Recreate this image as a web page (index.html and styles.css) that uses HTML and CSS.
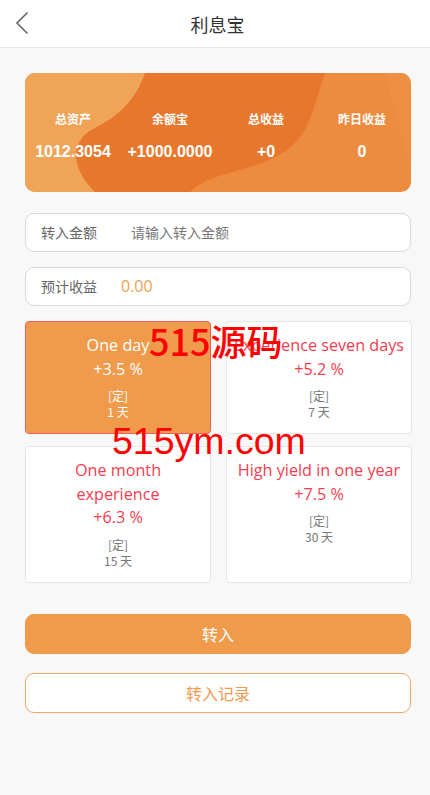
FILE: index.html
```html
<!DOCTYPE html>
<html lang="zh-CN">
<head>
<meta charset="utf-8">
<title>利息宝</title>
<link rel="stylesheet" href="styles.css">
</head>
<body>
<div class="page">
  <header class="topbar">
    <a class="back" href="#" aria-label="返回">
      <svg width="14" height="24" viewBox="0 0 14 24"><path d="M12.5 1.5 L2 12 L12.5 22.5" fill="none" stroke="#666" stroke-width="1.6"/></svg>
    </a>
    <h1 class="title">利息宝</h1>
  </header>

  <main class="content">
    <section class="banner">
      <svg class="banner-bg" viewBox="0 0 386 119" preserveAspectRatio="none">
        <rect width="386" height="119" fill="#ed8b3e"/>
        <path d="M0 0 H120 C110 30 90 45 70 55 C40 70 50 100 70 119 H0 Z" fill="#f0a458"/>
        <path d="M120 0 H300 C290 30 285 55 270 70 C240 100 190 95 165 119 H70 C50 100 40 70 70 55 C90 45 110 30 120 0 Z" fill="#e8772e"/>
        <path d="M360 0 C370 40 380 70 386 100 V0 Z" fill="#ee934a" opacity="0.6"/>
      </svg>
      <div class="stats">
        <div class="stat"><span class="stat-label">总资产</span><span class="stat-value">1012.3054</span></div>
        <div class="stat"><span class="stat-label">余额宝</span><span class="stat-value">+1000.0000</span></div>
        <div class="stat"><span class="stat-label">总收益</span><span class="stat-value">+0</span></div>
        <div class="stat"><span class="stat-label">昨日收益</span><span class="stat-value">0</span></div>
      </div>
    </section>

    <div class="field">
      <span class="field-label">转入金额</span>
      <input class="field-input" type="text" placeholder="请输入转入金额">
    </div>
    <div class="field">
      <span class="field-label">预计收益</span>
      <span class="field-value">0.00</span>
    </div>

    <div class="plans">
      <div class="plan active">
        <div class="plan-name">One day</div>
        <div class="plan-rate">+3.5 %</div>
        <div class="plan-type">[定]</div>
        <div class="plan-days">1 天</div>
      </div>
      <div class="plan">
        <div class="plan-name">Experience seven days</div>
        <div class="plan-rate">+5.2 %</div>
        <div class="plan-type">[定]</div>
        <div class="plan-days">7 天</div>
      </div>
      <div class="plan">
        <div class="plan-name">One month<br>experience</div>
        <div class="plan-rate">+6.3 %</div>
        <div class="plan-type">[定]</div>
        <div class="plan-days">15 天</div>
      </div>
      <div class="plan">
        <div class="plan-name">High yield in one year</div>
        <div class="plan-rate">+7.5 %</div>
        <div class="plan-type">[定]</div>
        <div class="plan-days">30 天</div>
      </div>
    </div>

    <button class="btn btn-primary" type="button">转入</button>
    <button class="btn btn-outline" type="button">转入记录</button>
  </main>

  <div class="wm wm1">515源码</div>
  <div class="wm wm2">515ym.com</div>
</div>
</body>
</html>
```

FILE: styles.css
```css
* { box-sizing: border-box; }
html, body { margin: 0; padding: 0; }
body {
  background: #f8f8f8;
  font-family: "Open Sans", "Noto Sans CJK SC", sans-serif;
  color: #333;
  width: 430px;
  min-height: 795px;
}
.page { position: relative; min-height: 795px; }

.topbar {
  height: 48px;
  background: #fff;
  border-bottom: 1px solid #e6e6e6;
  display: flex;
  align-items: center;
  justify-content: center;
  position: relative;
}
.back {
  position: absolute;
  left: 15px;
  top: 11px;
  display: block;
  line-height: 0;
}
.title {
  margin: 0 0 0 5px;
  font-size: 18px;
  font-weight: 400;
  color: #333;
  font-family: "Noto Sans CJK SC", sans-serif;
}

.content {
  padding: 25px 19px 0 25px;
  display: flex;
  flex-direction: column;
}

.banner {
  position: relative;
  height: 119px;
  border-radius: 10px;
  overflow: hidden;
}
.banner-bg {
  position: absolute;
  inset: 0;
  width: 100%;
  height: 100%;
}
.stats {
  position: relative;
  display: grid;
  grid-template-columns: 96px 98px 94px 98px;
  padding-top: 37px;
  color: #fff;
  text-align: center;
}
.stat { display: flex; flex-direction: column; align-items: center; }
.stat-label {
  font-family: "Noto Sans CJK SC", sans-serif;
  font-size: 12px;
  font-weight: 700;
  line-height: 18px;
}
.stat-value {
  margin-top: 14px;
  font-family: "Liberation Sans", "Noto Sans CJK SC", sans-serif;
  font-size: 16px;
  font-weight: 700;
  line-height: 20px;
}

.field {
  margin-top: 21px;
  height: 39px;
  background: #fff;
  border: 1px solid #d9d9d9;
  border-radius: 9px;
  display: flex;
  align-items: center;
  padding-left: 15px;
  padding-bottom: 1px;
}
.field + .field { margin-top: 15px; }
.field-label {
  font-family: "Noto Sans CJK SC", sans-serif;
  font-size: 14px;
  color: #666;
  width: 80px;
  flex: none;
}
.field-input {
  border: 0;
  outline: 0;
  background: transparent;
  font-family: "Noto Sans CJK SC", sans-serif;
  font-size: 14px;
  padding: 0 0 0 10px;
  color: #333;
  flex: 1;
}
.field-input::placeholder { color: #777; }
.field-value {
  font-family: "Open Sans", sans-serif;
  font-size: 16px;
  color: #f0a04f;
}

.plans {
  margin-top: 15px;
  display: grid;
  grid-template-columns: 186px 186px;
  column-gap: 15px;
  row-gap: 12px;
}
.plan {
  background: #fff;
  border: 1px solid #e6e6e6;
  border-radius: 4px;
  text-align: center;
  padding: 12px 2px 12px;
  min-height: 113px;
}
.plan:nth-child(n+3) { min-height: 137px; }
.plan.active {
  background: #f09a4b;
  border-color: #f2605a;
}
.plan-name, .plan-rate {
  font-size: 16.2px;
  line-height: 23.5px;
  color: #f43d50;
}
.plan-type, .plan-days {
  font-family: "Noto Sans CJK SC", sans-serif;
  font-size: 12px;
  line-height: 16px;
  color: #777;
}
.plan-type { margin-top: 7px; }
.plan.active .plan-name,
.plan.active .plan-rate,
.plan.active .plan-type,
.plan.active .plan-days { color: #fff; }

.btn {
  display: block;
  width: 100%;
  height: 40px;
  border-radius: 9px;
  font-family: "Noto Sans CJK SC", sans-serif;
  font-size: 16px;
  cursor: pointer;
}
.btn-primary {
  margin-top: 31px;
  background: #f09b4b;
  border: 1px solid #f09b4b;
  color: #fff;
}
.btn-outline {
  margin-top: 19px;
  background: #fff;
  border: 1px solid #f0a76a;
  color: #ef9a4f;
}

.wm {
  position: absolute;
  color: #f00;
  font-family: "Noto Sans CJK SC", sans-serif;
  font-weight: 500;
  white-space: nowrap;
  line-height: 1;
}
.wm1 { left: 149px; top: 322px; font-size: 36px; }
.wm2 { left: 112px; top: 423px; font-size: 37.5px; font-weight: 400; font-family: "Liberation Sans", sans-serif; }
```
